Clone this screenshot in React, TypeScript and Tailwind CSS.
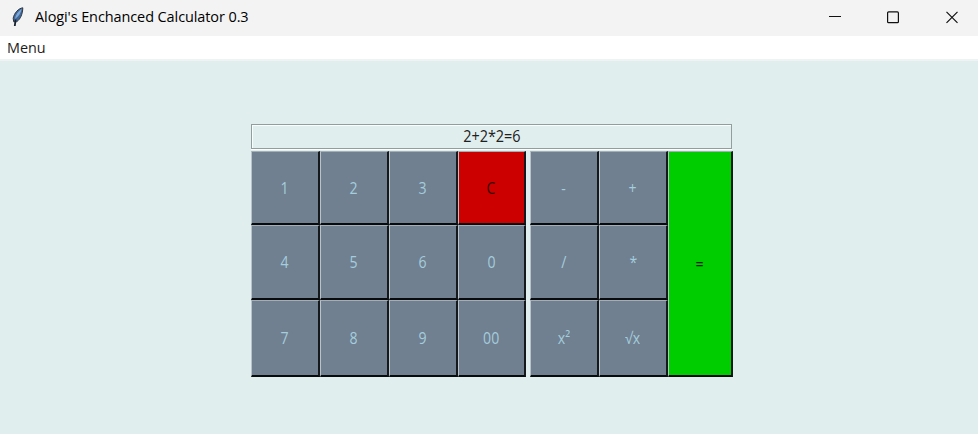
import React from "react";

type KeyProps = { label: React.ReactNode; tone?: string; className?: string };

function Key({ label, tone = "bg-[#708090] text-[#a4cddd]", className = "" }: KeyProps) {
  return (
    <button
      className={`flex items-center justify-center border-t border-l border-r-2 border-b-2 border-t-[#a3aeb6] border-l-[#b8c3c9] border-r-[#15191c] border-b-[#080a0b] text-[16px] leading-5 ${tone} ${className}`}
    >
      <span className="block scale-x-[0.88]">{label}</span>
    </button>
  );
}

function Feather() {
  return (
    <svg width="14" height="20" viewBox="0 0 14 20" className="block">
      <path d="M11.8.8C7.5 1.3 3.2 6 2.2 11.2l.5 3.6 3-.1c3.8-2.4 6-8 6.1-13.9Z" fill="#426b9b" stroke="#303640" strokeWidth="1" />
      <path d="M10.8 1.8C7 4.5 4.6 8 4 12c3.2-2 6-6 6.8-10.2Z" fill="#7fa9d8" />
      <path d="M4.6 12.5 3.8 19" fill="none" stroke="#182332" strokeWidth="1.8" />
    </svg>
  );
}

export default function App() {
  return (
    <div className="flex h-[434px] w-[978px] flex-col overflow-hidden bg-[#e0eeee] font-['Open_Sans','Noto_Sans',sans-serif] text-black">
      <header className="flex h-9 shrink-0 items-center justify-between bg-[#f3f3f3] pl-[11px]">
        <div className="flex items-center gap-[10px] pb-[3px]">
          <Feather />
          <h1 className="origin-left scale-x-[0.966] pb-[2px] text-[15px] leading-5 tracking-[-0.1px] whitespace-nowrap">Alogi's Enchanced Calculator 0.3</h1>
        </div>
        <div className="flex pr-[20px] pb-[3px]">
          <svg width="130" height="14" viewBox="0 0 130 14" fill="none" stroke="#111">
            <path d="M1 6.5h12" />
            <rect x="59.6" y="1.9" width="10.8" height="10.8" rx="1" strokeWidth="1.2" />
            <path d="m118.5 1.8 11 11m0-11-11 11" strokeWidth="1.2" />
          </svg>
        </div>
      </header>
      <nav className="flex h-[25px] shrink-0 items-center border-b-2 border-[#f0f3f3] bg-white pl-[7px] text-[15px] leading-5 text-[#1c1c20]">
        <span className="block origin-left scale-x-[0.96] pb-px">Menu</span>
      </nav>
      <main className="flex flex-col pt-[63px] pl-[251px]">
        <div className="flex h-[25px] w-[481px] items-center justify-center border border-[#929e9e] text-[16px] leading-5 text-[#202020] shadow-[inset_1px_1px_0_#f8ffff,0_1px_0_#ffffff]">
          <span className="block scale-x-[0.9] pb-px">2+2*2=6</span>
        </div>
        <div className="mt-[2px] flex h-[226px] gap-[4px]">
          <section className="grid grid-cols-[69px_69px_69px_68px] grid-rows-[74px_75px_77px]">
            <Key label="1" />
            <Key label="2" />
            <Key label="3" />
            <Key label="C" tone="bg-[#cd0000] text-[#300000]" />
            <Key label="4" />
            <Key label="5" />
            <Key label="6" />
            <Key label="0" />
            <Key label="7" />
            <Key label="8" />
            <Key label="9" />
            <Key label="00" />
          </section>
          <section className="grid grid-cols-[69px_69px_65px] grid-rows-[74px_75px_77px]">
            <Key label="-" />
            <Key label="+" />
            <Key label="=" tone="bg-[#00cd00] text-[#002000]" className="row-span-3" />
            <Key label="/" />
            <Key label="*" />
            <Key label="x²" />
            <Key label="√x" />
          </section>
        </div>
      </main>
    </div>
  );
}
